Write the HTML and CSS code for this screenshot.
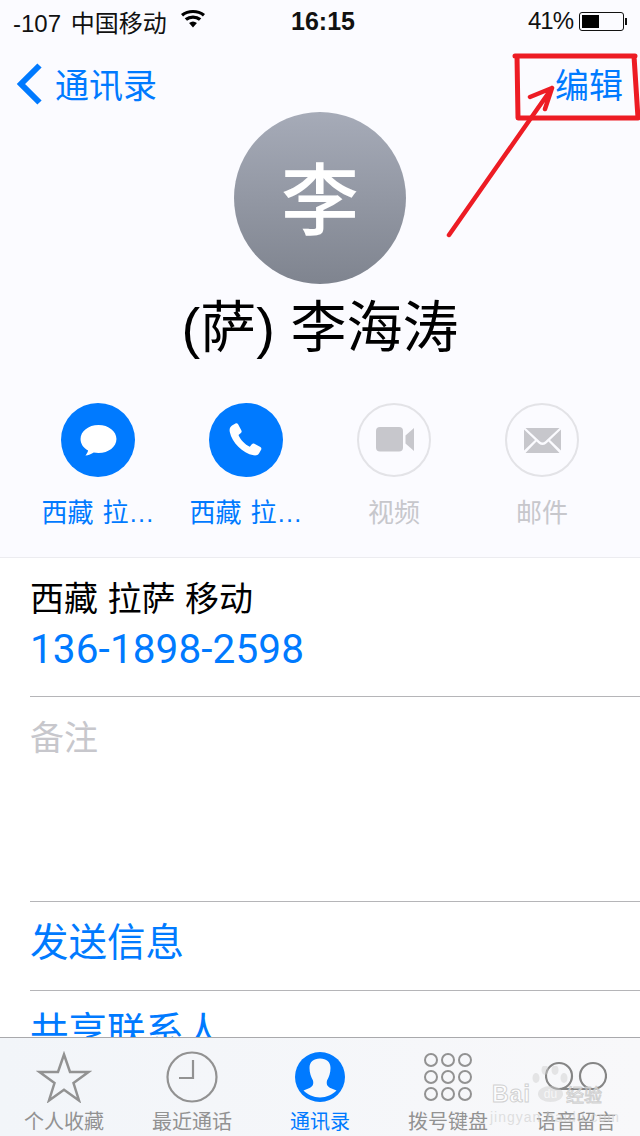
FILE: index.html
```html
<!DOCTYPE html>
<html lang="zh-CN">
<head>
    <meta charset="UTF-8">
    <title>通讯录</title>
    <link rel="stylesheet" href="styles.css">
</head>
<body>
    <div class="screen">
        <div class="contact-scroll">
            <div class="contact-top">
                <div class="status-bar">
                    <div class="status-left">
                        <span class="carrier">-107 中国移动</span>
                        <svg class="wifi" width="24" height="18" viewBox="0 0 22 18" preserveAspectRatio="none"><path d="M11 17.500 7.400 13a5.600 5.600 0 0 1 7.200 0zM5.500 10.800 3.400 8.200a12 12 0 0 1 15.200 0l-2.100 2.600a8.700 8.700 0 0 0-11 0zM1.900 6.400 0 4a17.200 17.200 0 0 1 22 0l-1.900 2.400a14.200 14.200 0 0 0-18.200 0z" fill="#000"/></svg>
                    </div>
                    <div class="status-time">16:15</div>
                    <div class="status-right">
                        <span class="percent">41%</span>
                        <div class="battery"><div class="battery-fill"></div></div>
                        <div class="battery-tip"></div>
                    </div>
                </div>
                <div class="nav-bar">
                    <div class="nav-back">
                        <svg width="26" height="42" viewBox="0 0 26 42"><path d="M23.500 2.500 5 21l18.500 18.500" fill="none" stroke="#007aff" stroke-width="6"/></svg>
                        <span>通讯录</span>
                    </div>
                    <div class="nav-edit">编辑</div>
                </div>
                <div class="avatar">李</div>
                <div class="contact-name">(萨) 李海涛</div>
                <div class="actions">
                    <div class="action">
                        <div class="action-circle">
                            <svg width="37" height="33" viewBox="0 0 38 34"><path d="M19 1C8.500 1 .5 7.500.5 15.500c0 5 3 9.300 7.800 11.900-.5 2-1.700 4-2.800 5.100 3.100-.2 6.300-1.500 8.600-3.100 1.500.3 3.200.5 4.900.5 10.500 0 18.500-6.400 18.500-14.400S29.500 1 19 1z" fill="#fff"/></svg>
                        </div>
                        <div class="action-label">西藏 拉…</div>
                    </div>
                    <div class="action">
                        <div class="action-circle">
                            <svg width="34" height="34" viewBox="0 0 34 34"><path d="M3 2.500 6.500.5c1-.5 2-.2 2.600.8l3.300 6.200c.5 1 .3 1.900-.5 2.600L9.500 12c1.800 4.800 6.500 9.600 11.300 11.700l2-2.400c.7-.8 1.700-1 2.600-.5l6 3.300c1 .6 1.300 1.700.7 2.700l-2 3.400c-1 1.700-3 2.500-5.500 2.100C13.500 30.300 3 19.500.8 9 .2 6.300 1 3.900 3 2.500z" fill="#fff"/></svg>
                        </div>
                        <div class="action-label">西藏 拉…</div>
                    </div>
                    <div class="action off">
                        <div class="action-circle">
                            <svg width="40" height="26" viewBox="-2 0 40 26"><rect x="0" y="0" width="27" height="24.500" rx="4" fill="#c7c7cc"/><path d="M29.500 8.500 38 1v23l-8.500-7.500z" fill="#c7c7cc"/></svg>
                        </div>
                        <div class="action-label">视频</div>
                    </div>
                    <div class="action off">
                        <div class="action-circle">
                            <svg width="37" height="25" viewBox="0 0 37 25"><path d="M1.500 0h34L21 13.500c-1.500 1.300-3.500 1.300-5 0zM0 1.500 11 12 0 22.500zM37 1.500 26 12l11 10.500zM12.500 13.500l2.500 2.300c2 1.700 5 1.700 7 0l2.500-2.300L35.500 25h-34z" fill="#c7c7cc"/></svg>
                        </div>
                        <div class="action-label">邮件</div>
                    </div>
                </div>
            </div>
            <div class="contact-list">
                <div class="row phone-row">
                    <div class="phone-label">西藏 拉萨 移动</div>
                    <div class="phone-number">136-1898-2598</div>
                </div>
                <div class="row note-row">备注</div>
                <div class="row link-row">发送信息</div>
                <div class="row link-row">共享联系人</div>
            </div>
        </div>
        <div class="tab-bar">
            <div class="tab">
                <svg width="56" height="52" viewBox="0 0 56 52"><path d="M28 3.500 34 21h18.500L37.500 32l5.500 17.500L28 38.700 13 49.500 18.500 32 3.500 21H22z" fill="none" stroke="#929292" stroke-width="2.500"/></svg>
                <span>个人收藏</span>
            </div>
            <div class="tab">
                <svg width="52" height="52" viewBox="0 0 52 52"><circle cx="26" cy="26" r="24.500" fill="none" stroke="#929292" stroke-width="2.200"/><path d="M27 9v18H13" fill="none" stroke="#929292" stroke-width="2.200"/></svg>
                <span>最近通话</span>
            </div>
            <div class="tab active">
                <svg width="52" height="52" viewBox="0 0 52 52"><circle cx="26" cy="26" r="25" fill="#007aff"/><path d="M26 7.500c-6.500 0-10.500 3.500-10.500 9.500 0 5 1.500 9 3.500 12.500 1 4-.8 6.500-4 7.800L9.500 39.500c4 4 10 7 16.500 7s12.500-3 16.500-7L37 37.300c-3.200-1.300-5-3.800-4-7.800 2-3.500 3.500-7.500 3.500-12.500 0-6-4-9.500-10.500-9.500z" fill="#f6f8fb"/></svg>
                <span>通讯录</span>
            </div>
            <div class="tab">
                <div class="keypad">
                    <i></i><i></i><i></i><i></i><i></i><i></i><i></i><i></i><i></i>
                </div>
                <span>拨号键盘</span>
            </div>
            <div class="tab">
                <svg width="62" height="52" viewBox="0 0 62 52"><circle cx="14" cy="25" r="13" fill="none" stroke="#858585" stroke-width="2.200"/><circle cx="48" cy="25" r="13" fill="none" stroke="#858585" stroke-width="2.200"/><path d="M14 38h34" stroke="#858585" stroke-width="2.200"/></svg>
                <span>语音留言</span>
            </div>
        </div>

        <!-- red marks and watermark drawn on top of the screenshot -->
        <svg class="marks" width="640" height="1136" viewBox="0 0 640 1136">
            <path d="M515 56 H635 M517 56 L518 118 H638 L634 56" fill="none" stroke="#ed1c24" stroke-width="5" stroke-linejoin="round" stroke-linecap="round"/>
            <path d="M449 235 L552 88 M530 97 L552 88 L545 109" fill="none" stroke="#ed1c24" stroke-width="4.500" stroke-linecap="round" stroke-linejoin="round"/>
        </svg>
        <div class="watermark">
            <svg class="wm-paw" width="40" height="20" viewBox="0 2 40 20"><g fill="rgba(205,205,205,0.45)"><ellipse cx="6" cy="14" rx="3.500" ry="5"/><ellipse cx="15" cy="6" rx="3.500" ry="5"/><ellipse cx="25" cy="6" rx="3.500" ry="5"/><ellipse cx="34" cy="14" rx="3.500" ry="5"/></g></svg>
            <div class="wm-main">
                <span class="wm-bai">Bai</span>
                <span class="wm-du">du</span>
                <span class="wm-cn">经验</span>
            </div>
            <div class="wm-sub">jingyan.baidu.com</div>
        </div>
    </div>
</body>
</html>
```

FILE: styles.css
```css
* {
    margin: 0;
    padding: 0;
    box-sizing: border-box;
}

body {
    font-family: "Liberation Sans", "Noto Sans CJK SC", sans-serif;
    background: #fff;
}

.screen {
    position: relative;
    width: 640px;
    height: 1136px;
    overflow: hidden;
    display: flex;
    flex-direction: column;
}

.contact-scroll {
    flex: 1;
    min-height: 0;
    overflow: hidden;
}

.contact-top {
    height: 558px;
    background: #fbfbff;
    border-bottom: 1px solid #ececf0;
}

.status-bar {
    height: 42px;
    padding: 0 13px;
    display: flex;
    align-items: center;
    justify-content: space-between;
    font-size: 24px;
    color: #111;
}

.status-left {
    width: 256px;
    display: flex;
    align-items: center;
    gap: 14px;
}

.carrier {
    word-spacing: 3px;
}

.wifi {
    margin-top: -4px;
}

.status-time {
    font-weight: bold;
    font-size: 25px;
}

.status-right {
    width: 250px;
    display: flex;
    align-items: center;
    justify-content: flex-end;
    gap: 6px;
}

.percent {
    letter-spacing: -1px;
}

.battery {
    width: 45px;
    height: 19px;
    border: 1px solid #111;
    border-radius: 3px;
    padding: 2px;
}

.battery-fill {
    width: 17px;
    height: 100%;
    background: #000;
}

.battery-tip {
    width: 2px;
    height: 7px;
    margin-left: -5px;
    background: #111;
}

.nav-bar {
    height: 70px;
    padding: 13px 17px 0 16px;
    display: flex;
    align-items: center;
    justify-content: space-between;
    color: #007aff;
    font-size: 34px;
}

.nav-back {
    display: flex;
    align-items: center;
    gap: 13px;
}

.avatar {
    width: 172px;
    height: 172px;
    margin: 0 auto;
    padding-bottom: 6px;
    border-radius: 50%;
    background: linear-gradient(#a6abb8, #7f848f);
    color: #fff;
    font-size: 78px;
    font-weight: 500;
    display: flex;
    align-items: center;
    justify-content: center;
}

.contact-name {
    margin-top: 12px;
    height: 64px;
    line-height: 64px;
    font-size: 56px;
    text-align: center;
    color: #000;
}

.actions {
    margin-top: 43px;
    padding: 0 24px;
    display: flex;
}

.action {
    width: 148px;
    display: flex;
    flex-direction: column;
    align-items: center;
    color: #007aff;
}

.action-circle {
    width: 74px;
    height: 74px;
    border-radius: 50%;
    background: #007aff;
    display: flex;
    align-items: center;
    justify-content: center;
}

.action-label {
    margin-top: 17px;
    font-size: 26px;
    line-height: 38px;
    word-spacing: 2px;
    white-space: nowrap;
}

.action.off {
    color: #c7c7cc;
}

.action.off .action-circle {
    background: none;
    border: 2px solid #e3e3e7;
}

.contact-list {
    padding-left: 30px;
    background: #fff;
}

.row {
    border-bottom: 1px solid #b5b5b8;
}

.phone-row {
    height: 139px;
    padding-top: 20px;
}

.phone-label {
    font-size: 34px;
    line-height: 42px;
    color: #000;
}

.phone-number {
    margin-top: 4px;
    font-family: Roboto, "Liberation Sans", sans-serif;
    font-size: 40.5px;
    line-height: 50px;
    letter-spacing: 0.1px;
    color: #007aff;
}

.note-row {
    height: 205px;
    padding-top: 18px;
    font-size: 34px;
    line-height: 46px;
    color: #c7c7cc;
}

.link-row {
    height: 89px;
    font-size: 38.5px;
    line-height: 82px;
    color: #007aff;
}

.tab-bar {
    height: 99px;
    flex-shrink: 0;
    padding-top: 13px;
    display: flex;
    background: linear-gradient(90deg, #f2f5f9, #f8f8fa);
    border-top: 1px solid #a9a9ac;
}

.tab {
    width: 128px;
    display: flex;
    flex-direction: column;
    align-items: center;
    gap: 7px;
    font-size: 20px;
    line-height: 24px;
    color: #929292;
}

.tab.active {
    color: #007aff;
}

.keypad {
    width: 48px;
    height: 52px;
    display: grid;
    grid-template-columns: repeat(3, 14px);
    grid-auto-rows: 14px;
    gap: 3px;
    justify-content: center;
    align-content: center;
}

.keypad i {
    border: 2px solid #929292;
    border-radius: 50%;
}

.marks {
    position: absolute;
    top: 0;
    left: 0;
}

.watermark {
    position: absolute;
    left: 490px;
    top: 1066px;
    width: 116px;
}

.wm-paw {
    display: block;
    margin-left: 40px;
}

.wm-main {
    margin-top: -2px;
    display: flex;
    align-items: center;
    height: 20px;
    color: rgba(255, 255, 255, 0.7);
    -webkit-text-stroke: 1px rgba(190, 190, 190, 0.7);
}

.wm-bai {
    margin-left: 2px;
    width: 46px;
    font-size: 23px;
    font-weight: bold;
    letter-spacing: 1px;
}

.wm-du {
    width: 25px;
    height: 16px;
    border-radius: 50%;
    background: rgba(205, 205, 205, 0.45);
    font-size: 12px;
    line-height: 16px;
    text-align: center;
    -webkit-text-stroke: 0;
}

.wm-cn {
    margin-left: 3px;
    font-size: 18px;
    white-space: nowrap;
}

.wm-sub {
    margin-top: 5px;
    font-size: 14px;
    line-height: 16px;
    letter-spacing: 1px;
    white-space: nowrap;
    color: rgba(205, 205, 205, 0.6);
}
```
